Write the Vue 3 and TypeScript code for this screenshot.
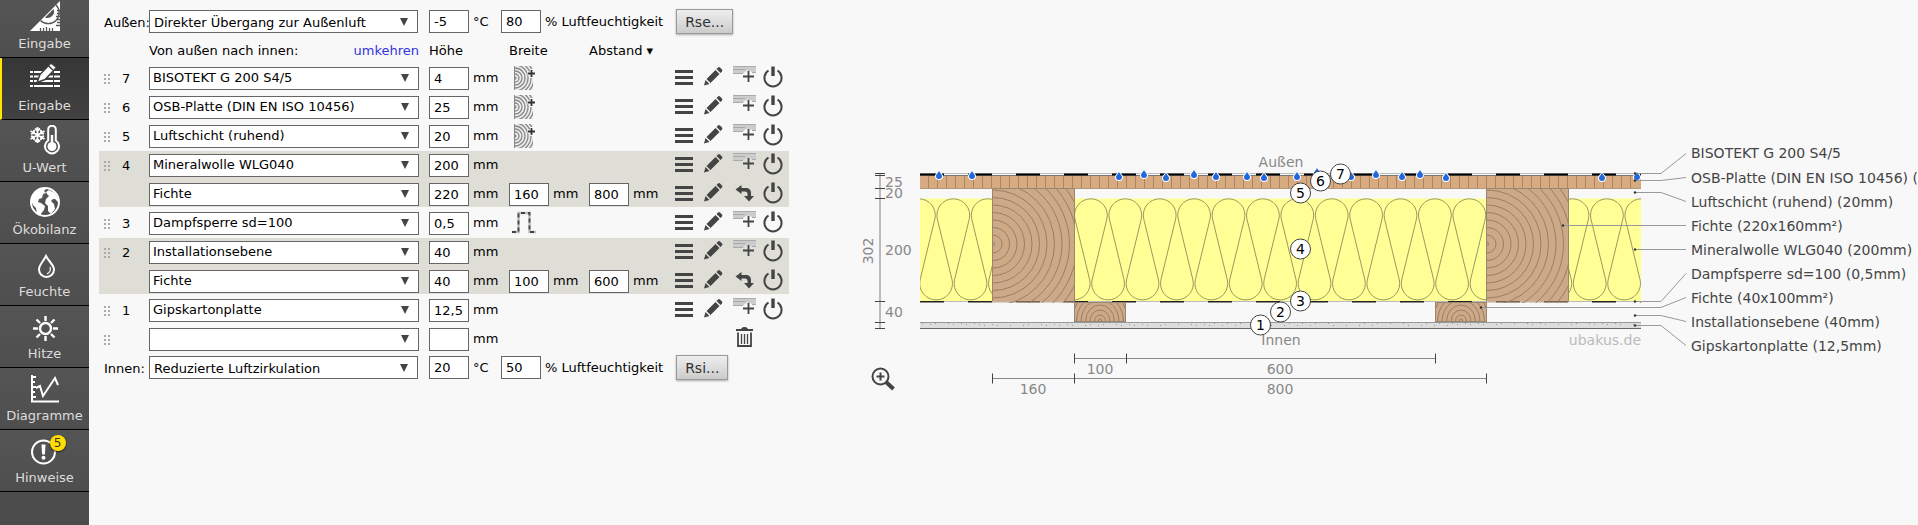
<script setup lang="ts">
import { reactive } from 'vue'

interface NavItem { label: string; icon: string; active?: boolean; badge?: number }
interface Row {
  material: string
  height: string
  width?: string
  spacing?: string
  extra?: 'wood' | 'fold'
  actions: string[]
}
interface Layer { no: string; framed?: boolean; rows: Row[] }
interface Climate {
  id: string
  label: string
  kind: string
  temp: string
  humidity: string
  button: string
}

const nav: NavItem[] = [
  { label: 'Eingabe', icon: 'ruler' },
  { label: 'Eingabe', icon: 'edit', active: true },
  { label: 'U-Wert', icon: 'thermo' },
  { label: 'Ökobilanz', icon: 'globe' },
  { label: 'Feuchte', icon: 'drop' },
  { label: 'Hitze', icon: 'sun' },
  { label: 'Diagramme', icon: 'chart' },
  { label: 'Hinweise', icon: 'alert', badge: 5 },
]

const outside = reactive<Climate>({
  id: 'aussen', label: 'Außen:', kind: 'Direkter Übergang zur Außenluft', temp: '-5', humidity: '80', button: 'Rse...',
})
const inside = reactive<Climate>({
  id: 'innen', label: 'Innen:', kind: 'Reduzierte Luftzirkulation', temp: '20', humidity: '50', button: 'Rsi...',
})

const std = ['menu', 'pencil', 'add', 'power']
const beam = ['menu', 'pencil', 'turn', 'power']
const layers = reactive<Layer[]>([
  { no: '7', rows: [{ material: 'BISOTEKT G 200 S4/5', height: '4', extra: 'wood', actions: std }] },
  { no: '6', rows: [{ material: 'OSB-Platte (DIN EN ISO 10456)', height: '25', extra: 'wood', actions: std }] },
  { no: '5', rows: [{ material: 'Luftschicht (ruhend)', height: '20', extra: 'wood', actions: std }] },
  {
    no: '4', framed: true, rows: [
      { material: 'Mineralwolle WLG040', height: '200', actions: std },
      { material: 'Fichte', height: '220', width: '160', spacing: '800', actions: beam },
    ],
  },
  { no: '3', rows: [{ material: 'Dampfsperre sd=100', height: '0,5', extra: 'fold', actions: std }] },
  {
    no: '2', framed: true, rows: [
      { material: 'Installationsebene', height: '40', actions: std },
      { material: 'Fichte', height: '40', width: '100', spacing: '600', actions: beam },
    ],
  },
  { no: '1', rows: [{ material: 'Gipskartonplatte', height: '12,5', actions: std }] },
  { no: '', rows: [{ material: '', height: '', actions: ['', '', 'trash', ''] }] },
])

const actionNames: Record<string, string> = {
  menu: 'Menü', pencil: 'Bearbeiten', add: 'Schicht einfügen', turn: 'Drehen', power: 'Ein/Aus', trash: 'Löschen',
}

/* Section drawing */
const left = 60
const right = 781
const beams = [132, 626]
const battens = [214, 575]

const boardJoints = Array.from({ length: 79 }, (_, i) => left + 9 * (i + 1))

function woolPath(): string {
  const step = 34.4
  let d = ''
  for (let k = -8; k < 16; k++) {
    const c = 299.7 + k * step
    const n = c + step / 2
    d += `${d ? 'L' : 'M'}${(c - 16).toFixed(1)} 78.8A16.4 16.4 0 1 1 ${(c + 16).toFixed(1)} 78.8`
    d += `L${(n - 16).toFixed(1)} 139.9A16.4 16.4 0 1 0 ${(n + 16).toFixed(1)} 139.9`
  }
  return d
}
const wool = woolPath()

const rings = Array.from({ length: 13 }, (_, i) => 7.5 * (i + 1) + 1.5)
const smallRings = [2, 6, 11, 16, 21, 26, 31]

const speckles = Array.from({ length: 90 }, (_, i) => ({
  x: left + ((i * 137 + (i % 7) * 31) % 716) + 2,
  y: 183 + ((i * 5 + (i % 3)) % 5),
}))

const drops: [number, number][] = [
  [79, 35], [112, 35], [259, 36], [284, 34], [306, 37], [334, 34], [356, 36], [387, 36], [404, 37],
  [437, 36], [457, 32], [491, 36], [516, 34], [542, 36], [560, 34], [586, 37], [742, 37], [777, 36],
]

const markers = [
  { n: 7, x: 480, y: 34 }, { n: 6, x: 460, y: 41 }, { n: 5, x: 440, y: 53 }, { n: 4, x: 440, y: 109 },
  { n: 3, x: 440, y: 161 }, { n: 2, x: 420, y: 172 }, { n: 1, x: 400, y: 185 },
]

const legend = [
  { text: 'BISOTEKT G 200 S4/5', x: 775, y: 33.5 },
  { text: 'OSB-Platte (DIN EN ISO 10456) (25mm)', x: 775, y: 40.5 },
  { text: 'Luftschicht (ruhend) (20mm)', x: 775, y: 52.5 },
  { text: 'Fichte (220x160mm²)', x: 703, y: 85.5 },
  { text: 'Mineralwolle WLG040 (200mm)', x: 775, y: 109.5 },
  { text: 'Dampfsperre sd=100 (0,5mm)', x: 775, y: 161.5 },
  { text: 'Fichte (40x100mm²)', x: 621, y: 167.5 },
  { text: 'Installationsebene (40mm)', x: 775, y: 175.5 },
  { text: 'Gipskartonplatte (12,5mm)', x: 775, y: 185.5 },
]

const sideTicks = [33.5, 35.5, 48.5, 58.5, 161.5, 182.5, 188.5]
const sideDims = [
  { text: '25', y: 47 }, { text: '20', y: 58 }, { text: '200', y: 115 }, { text: '40', y: 177 },
]
const baseDims = [
  { y: 218.5, ticks: [214.5, 266.5, 575.5], labels: [{ text: '100', x: 240 }, { text: '600', x: 420 }] },
  { y: 238.5, ticks: [132.5, 214.5, 626.5], labels: [{ text: '160', x: 173 }, { text: '800', x: 420 }] },
]
</script>

<template>
  <svg class="defs" width="0" height="0" aria-hidden="true">
    <symbol id="i-ruler" viewBox="0 0 30 30">
      <path fill="#fff" d="M30 0V30H0Z" />
      <path fill="none" stroke="#555" stroke-width="1.300" d="M10.500 19.500A10.500 10.500 0 0 0 26 4" />
      <path fill="#555" d="M15 16.500L23.500 8A6.500 6.500 0 0 1 15 16.500Z" />
      <path stroke="#555" stroke-width="1.300" d="M10.500 30v-3M13.500 30v-3M16.500 30v-4M19.500 30v-3M22.500 30v-3M30 24.500h-4M30 21.500h-3M30 18.500h-3M30 15.500h-4M30 12.500h-3M30 9.500h-3" />
    </symbol>
    <symbol id="i-edit" viewBox="0 0 30 30">
      <path stroke="#fff" stroke-width="2" d="M0 9h30M0 13.500h30M0 18h30M0 23h30" />
      <path stroke="#404040" stroke-width="1" d="M3.500 7v17M23.500 7v17" />
      <path fill="#fff" stroke="#404040" stroke-width="1.500" d="M7 19.500l3-8L21 0l5.500 4.500L15 16.500Z" />
      <path stroke="#404040" stroke-width="1.500" d="M18 2.500l5 4.500" />
    </symbol>
    <symbol id="i-thermo" viewBox="0 0 30 30">
      <g fill="none" stroke="#fff" stroke-width="1.800">
        <path d="M7.500 2v16M.5 6l14 8M14.500 6l-14 8M5 3.500l2.500 2.500L10 3.500M5 16.500l2.500-2.500 2.500 2.500M1 9l3-1V5M14 9l-3-1V5M1 11l3 1v3M14 11l-3 1v3" />
        <path stroke-width="2" d="M18.200 15.500V4.500a3.800 3.800 0 0 1 7.600 0V15.500a7 7 0 1 1-7.600 0Z" />
      </g>
      <circle cx="22" cy="21.500" r="4.500" fill="#fff" />
      <path stroke="#fff" stroke-width="2.500" d="M22 20V10" />
    </symbol>
    <symbol id="i-globe" viewBox="0 0 30 30">
      <circle cx="15" cy="15" r="14" fill="none" stroke="#fff" stroke-width="2" />
      <path fill="#fff" d="M3 7C6 2 11 0 16 2l-2 2 2 2-3 1-1 4-3 1-1 3 3 1 4 3-1 4-4 5-3-1-1-6-3-3-2-5ZM19 3l6 3 4 7-1 2-3-3-2 0-2 2 3 3 1 5-4 5-3-3 0-5-3-3 1-4 3-3-2-2-1-2Z" />
    </symbol>
    <symbol id="i-drop" viewBox="0 0 30 30">
      <path fill="none" stroke="#fff" stroke-width="2" d="M16 7C13 13 9 16 9 20.500a7.500 7.500 0 0 0 15 0C24 16 19 13 16 7Z" />
      <path fill="none" stroke="#fff" stroke-width="1.200" d="M20 18c1 3 0 5.500-3 7" />
    </symbol>
    <symbol id="i-sun" viewBox="0 0 30 30">
      <g fill="none" stroke="#fff" stroke-width="2.400">
        <circle cx="15.500" cy="17.500" r="5.500" />
        <path d="M15.500 5v5M15.500 25v5M3 17.500h5M23 17.500h5M6.500 8.500l3.500 3.500M24.500 8.500l-3.500 3.500M6.500 26.500l3.500-3.500M24.500 26.500l-3.500-3.500" />
      </g>
    </symbol>
    <symbol id="i-chart" viewBox="0 0 30 30">
      <path fill="none" stroke="#fff" stroke-width="2" d="M2 2v26.500h27M2 4h4M2 9h3M2 14h4M2 19h3M2 24h4" />
      <path fill="none" stroke="#fff" stroke-width="2" d="M6 15l4-2 3 10L25 5l3 7" />
    </symbol>
    <symbol id="i-alert" viewBox="0 0 30 30">
      <circle cx="13.500" cy="17" r="11.500" fill="none" stroke="#fff" stroke-width="2" />
      <path fill="#fff" d="M11.500 9.500h4l-.6 10h-2.800Z" />
      <circle cx="13.500" cy="22.800" r="2" fill="#fff" />
    </symbol>
    <symbol id="i-menu" viewBox="0 0 24 24">
      <path fill="#444" d="M3 4h18v3H3zM3 10h18v3H3zM3 16h18v3H3z" />
    </symbol>
    <symbol id="i-pencil" viewBox="0 0 24 24">
      <path fill="#444" d="M2 19.500l1.500-5.500 4 4ZM4.500 13L13.500 4l4 4-9 9ZM14.500 3l1.500-1.500q1-.8 2 0l2 2q.8 1 0 2L18.500 7Z" />
    </symbol>
    <symbol id="i-add" viewBox="0 0 24 24">
      <path fill="#ccc" d="M1 0h23v7h-3a6 6 0 0 0-10 1H1Z" />
      <path stroke="#aaa" d="M1 .5h23M1 3.500h12M1 7.500h10M20 6.500h4" />
      <path stroke="#444" stroke-width="1.800" d="M16.500 5v11M11 10.500h11" />
    </symbol>
    <symbol id="i-power" viewBox="0 0 24 24">
      <path fill="none" stroke="#444" stroke-width="2" d="M6.500 4.500a8.600 8.600 0 1 0 9 0" />
      <path stroke="#444" stroke-width="3.400" d="M11 .5v9.500" />
    </symbol>
    <symbol id="i-turn" viewBox="0 0 24 24">
      <path fill="#444" d="M3.500 7.500L9.500 3v3H14q5 0 5 5.500V14h3l-5 5.500L12 14h3.500v-2q0-2.500-2.500-2.500H9.500v2.500Z" />
    </symbol>
    <symbol id="i-trash" viewBox="0 0 24 24">
      <path fill="#444" d="M4 2h5q1-2 3-2h1q2 0 3 2h5v2H4z" />
      <path fill="none" stroke="#444" stroke-width="1.800" d="M6 5.500v13.500h13V5.500" />
      <path stroke="#444" stroke-width="1.300" d="M9.500 7v10M12.500 7v10M15.500 7v10" />
    </symbol>
    <symbol id="i-wood" viewBox="0 0 24 24">
      <svg x="2" y="0" width="19" height="24" viewBox="0 0 19 24">
        <rect width="19" height="24" fill="#eee" />
        <path stroke="#888" d="M.5 0v24" />
        <g fill="none" stroke="#888" stroke-width="1.300">
          <circle v-for="r in [1, 4, 7, 10, 13, 16, 19, 22]" :key="r" cx="1" cy="12" :r="r" />
        </g>
      </svg>
      <path stroke="#f8f8f8" stroke-width="4" d="M20 3v9M15.500 7.500h9" />
      <path stroke="#333" stroke-width="1.800" d="M19.500 4v7M16 7.500h7" />
    </symbol>
    <symbol id="i-fold" viewBox="0 0 24 24">
      <path fill="none" stroke="#bbb" stroke-width="2.400" d="M0 21h6.500V2h11v19H24" />
      <path fill="none" stroke="#444" stroke-width="1.800" stroke-dasharray="4 3" d="M0 21h6.500V2h11v19H24" />
    </symbol>
  </svg>

  <div class="page">
    <nav class="sidebar">
      <a v-for="(item, i) in nav" :key="i" href="#" class="nav-item" :class="{ active: item.active }">
        <span class="nav-icon">
          <svg width="30" height="30"><use :href="'#i-' + item.icon" /></svg>
          <span v-if="item.badge" class="badge">{{ item.badge }}</span>
        </span>
        <span>{{ item.label }}</span>
      </a>
    </nav>

    <form class="editor" @submit.prevent>
      <div class="climate">
        <label class="climate-label" :for="outside.id">{{ outside.label }}</label>
        <span class="picker">
          <select :id="outside.id" v-model="outside.kind"><option>{{ outside.kind }}</option></select>
          <svg width="8" height="8"><path d="M0 0h8L4 8Z" /></svg>
        </span>
        <label class="measure temp"><input v-model="outside.temp" type="text">°C</label>
        <label class="measure"><input v-model="outside.humidity" type="text">% Luftfeuchtigkeit</label>
        <button type="button" class="resist">{{ outside.button }}</button>
      </div>

      <div class="row heading">
        <span></span>
        <span class="heading-name">Von außen nach innen:<a href="#">umkehren</a></span>
        <span>Höhe</span>
        <span>Breite</span>
        <button type="button" class="plain">Abstand ▾</button>
      </div>

      <div v-for="layer in layers" :key="layer.no" class="layer" :class="{ framed: layer.framed }">
        <div v-for="(row, i) in layer.rows" :key="i" class="row">
          <span class="lead">
            <template v-if="i === 0">
              <svg width="6" height="10" class="grip">
                <path d="M0 0h2v2H0zM4 0h2v2H4zM0 4h2v2H0zM4 4h2v2H4zM0 8h2v2H0zM4 8h2v2H4z" />
              </svg>
              <span>{{ layer.no }}</span>
            </template>
          </span>
          <span class="picker">
            <select v-model="row.material" aria-label="Material"><option>{{ row.material }}</option></select>
            <svg width="8" height="8"><path d="M0 0h8L4 8Z" /></svg>
          </span>
          <label class="measure"><input v-model="row.height" type="text">mm</label>
          <label v-if="row.width" class="measure"><input v-model="row.width" type="text">mm</label>
          <button v-else-if="row.extra" type="button" class="plain extra" aria-label="Einlage">
            <svg width="24" height="24"><use :href="'#i-' + row.extra" /></svg>
          </button>
          <span v-else></span>
          <label v-if="row.spacing" class="measure"><input v-model="row.spacing" type="text">mm</label>
          <span v-else></span>
          <span class="actions">
            <template v-for="(a, j) in row.actions" :key="j">
              <button v-if="a" type="button" class="plain action" :aria-label="actionNames[a]">
                <svg width="24" height="24"><use :href="'#i-' + a" /></svg>
              </button>
              <span v-else class="action"></span>
            </template>
          </span>
        </div>
      </div>

      <div class="climate last">
        <label class="climate-label" :for="inside.id">{{ inside.label }}</label>
        <span class="picker">
          <select :id="inside.id" v-model="inside.kind"><option>{{ inside.kind }}</option></select>
          <svg width="8" height="8"><path d="M0 0h8L4 8Z" /></svg>
        </span>
        <label class="measure temp"><input v-model="inside.temp" type="text">°C</label>
        <label class="measure"><input v-model="inside.humidity" type="text">% Luftfeuchtigkeit</label>
        <button type="button" class="resist">{{ inside.button }}</button>
      </div>
    </form>

    <figure class="section">
      <svg class="drawing" viewBox="0 0 1058 260" preserveAspectRatio="xMinYMin meet">
        <defs>
          <clipPath id="c-section"><rect :x="left" y="30" :width="right - left" height="160" /></clipPath>
          <g id="d-drop">
            <path fill="#fff" d="M0-5C2.500-2 4-1 4 1a4 4 0 0 1-8 0C-4-1-2.500-2 0-5Z" />
            <path fill="#2268dd" d="M0-4C1.500-1.500 3-.5 3 1a3 3 0 0 1-6 0C-3-.5-1.500-1.500 0-4Z" />
          </g>
        </defs>

        <g clip-path="url(#c-section)">
          <rect :x="left" y="58.500" width="721" height="103" fill="#ffff96" />
          <path :d="wool" class="ink" />
          <path class="rule" d="M60 161.500H781" />
          <path class="dash barrier" d="M60 161.750H781" />
          <rect :x="left" y="36" width="721" height="12" fill="#d8aa82" />
          <path v-for="x in boardJoints" :key="x" :d="`M${x - .5} 36V48`" stroke="#a8875c" />
          <path d="M60 48.500H781" stroke="#b09a80" />
          <path class="rule" d="M60 33.500H781" />
          <path d="M60 35.500H781" stroke="#777" />
          <path class="dash" d="M60 34.500H781" />
          <rect :x="left" y="182" width="721" height="7" fill="#ddd" />
          <rect v-for="(s, i) in speckles" :key="i" :x="s.x" :y="s.y" width="1" height="1" fill="#999" />
          <path d="M60 182.500H781" stroke="#999" />
          <path d="M60 188.500H781" stroke="#666" />
        </g>

        <svg v-for="x in beams" :key="x" :x="x" y="48" width="83" height="115" viewBox="0 0 83 115">
          <rect width="83" height="113" fill="#cca987" />
          <rect y="113" width="83" height="2" fill="#cca987" opacity=".5" />
          <circle cx="1" cy="56" r="1.500" class="grain" />
          <circle v-for="r in rings" :key="r" cx="1" cy="56" :r="r" class="grain" />
          <path class="edge" d="M.5 113V.5H82.500V113" />
        </svg>
        <svg v-for="x in battens" :key="x" :x="x" y="162" width="52" height="20" viewBox="0 0 52 20">
          <rect width="52" height="20" fill="#cca987" />
          <ellipse v-for="r in smallRings" :key="r" cx="26" cy="19" :rx="r * .9" :ry="r" class="grain" />
          <rect x=".5" y=".5" width="51" height="19" class="edge" />
        </svg>

        <use v-for="(d, i) in drops" :key="i" href="#d-drop" :x="d[0]" :y="d[1]" />

        <g class="caption">
          <text x="421" y="27" text-anchor="middle">Außen</text>
          <text x="421" y="205" text-anchor="middle">Innen</text>
          <text x="781" y="205" text-anchor="end" class="source">ubakus.de</text>
          <text v-for="d in sideDims" :key="d.text" x="25" :y="d.y">{{ d.text }}</text>
          <text transform="translate(13 111) rotate(-90)" text-anchor="middle">302</text>
          <template v-for="b in baseDims" :key="b.y">
            <text v-for="l in b.labels" :key="l.text" :x="l.x" :y="b.y + 15.500" text-anchor="middle">{{ l.text }}</text>
          </template>
        </g>

        <path d="M20 33V189" stroke="#bbb" stroke-width="2" />
        <path v-for="y in sideTicks" :key="y" :d="`M15 ${y}H25`" stroke="#444" />
        <template v-for="b in baseDims" :key="b.y">
          <path :d="`M${b.ticks[0]} ${b.y}H${b.ticks[2]}`" stroke="#888" />
          <path v-for="t in b.ticks" :key="t" :d="`M${t} ${b.y - 5}v10`" stroke="#444" />
        </template>

        <g v-for="(l, i) in legend" :key="l.text">
          <path :d="`M${l.x} ${l.y}H${Math.abs(l.y - 13.5 - i * 24) < 1 ? 826 : 801}L826 ${13.5 + i * 24}`" class="leader" />
          <circle :cx="l.x" :cy="l.y" r="1.200" fill="#333" />
          <text x="831" :y="(i ? 19 : 18) + i * 24" class="legend">{{ l.text }}</text>
        </g>

        <g v-for="m in markers" :key="m.n">
          <circle :cx="m.x + .5" :cy="m.y" r="10" fill="#fff" stroke="#444" />
          <text :x="m.x + .5" :y="m.y + 5" text-anchor="middle" class="marker">{{ m.n }}</text>
        </g>
      </svg>
      <button type="button" class="plain zoom" aria-label="Vergrößern">
        <svg width="24" height="24" viewBox="0 0 24 24" fill="none" stroke="#444">
          <circle cx="9.500" cy="9.500" r="8" stroke-width="2" />
          <path stroke-width="2" d="M9.500 5.500v8M5.500 9.500h8" />
          <path stroke-width="4" d="M15 15l7.500 7" />
        </svg>
      </button>
    </figure>
  </div>
</template>

<style>
body {
  background: #f8f8f8;
}
</style>

<style scoped>
.page,
.page * {
  box-sizing: border-box;
}
.defs {
  display: none;
}
.page {
  display: flex;
  align-items: stretch;
  min-height: 100vh;
  overflow: hidden;
  font: 13px/16px "DejaVu Sans", Verdana, sans-serif;
  color: #000;
}
.page select,
.page input,
.page button {
  font: inherit;
  color: inherit;
  margin: 0;
}

.sidebar {
  flex: 0 0 89px;
  background: #4c4c4c;
}
.nav-item {
  display: flex;
  flex-direction: column;
  align-items: center;
  justify-content: flex-end;
  gap: 5px;
  height: 62px;
  padding-bottom: 5px;
  border-bottom: 1px solid #000;
  background: linear-gradient(#555, #4e4e4e);
  color: #ddd;
  text-decoration: none;
}
.nav-item:first-child {
  height: 58px;
}
.nav-item.active {
  border-left: 2px solid #ffe600;
  padding-right: 2px;
  background: linear-gradient(#363636, #424242);
}
.nav-icon {
  position: relative;
  display: block;
  height: 30px;
}
.nav-icon svg {
  display: block;
}
.badge {
  position: absolute;
  top: 0;
  right: -6px;
  width: 16px;
  height: 16px;
  border-radius: 50%;
  background: #fd0;
  color: #333;
  font-size: 12px;
  text-align: center;
  box-shadow: 0 1px 2px #222;
}

.editor {
  flex: 0 0 auto;
  width: 690px;
  margin-left: 10px;
  padding-top: 10px;
}
.climate {
  display: flex;
  align-items: center;
  height: 23px;
}
.climate.last {
  margin-top: 4px;
}
.climate-label {
  width: 50px;
  padding: 2px 0 0 5px;
  white-space: nowrap;
}
.climate .picker {
  width: 269px;
  margin-right: 11px;
}
.climate select {
  padding: 2px 24px 0 4px;
}
.temp {
  width: 72px;
}
.page .resist {
  height: 25px;
  margin-left: 13px;
  padding: 0 8px;
  border: 1px solid #999;
  background: linear-gradient(#eee, #ccc);
  box-shadow: 0 1px 2px #aaa;
  font-size: 14px;
  color: #333;
}

.row {
  display: grid;
  grid-template-columns: 50px 280px 80px 80px 80px 1fr;
  align-items: center;
  height: 23px;
}
.heading {
  height: 28px;
  margin-top: 3px;
  padding-top: 1px;
}
.heading-name {
  display: flex;
  justify-content: space-between;
  padding-right: 10px;
}
.heading a {
  color: #33d;
  text-decoration: none;
}
.layer {
  display: grid;
  gap: 6px;
  padding: 2px 0;
  margin-bottom: 2px;
}
.framed {
  background: #deded6;
}
.lead {
  display: flex;
  align-items: center;
  gap: 12px;
  padding: 2px 0 0 5px;
}
.grip {
  fill: #aaa;
}
.picker {
  display: grid;
  align-items: center;
  width: 270px;
}
.picker > * {
  grid-area: 1 / 1;
}
.picker svg {
  justify-self: end;
  margin-right: 10px;
  fill: #444;
  pointer-events: none;
}
select,
input {
  appearance: none;
  height: 23px;
  border: 1px solid #666;
  border-radius: 0;
  background: #fff;
}
select {
  width: 100%;
  padding: 0 24px 0 3px;
}
input {
  width: 40px;
  padding: 0 0 0 4px;
}
.measure {
  display: flex;
  align-items: center;
  gap: 4px;
  white-space: nowrap;
}
.plain {
  padding: 0;
  border: 0;
  background: none;
  text-align: left;
}
.plain svg {
  display: block;
}
.extra {
  padding-left: 3px;
}
.actions {
  display: flex;
  justify-content: flex-end;
  padding-right: 2px;
}
.action {
  width: 30px;
  padding-left: 3px;
}

.section {
  flex: 1 1 0;
  min-width: 0;
  display: grid;
  align-content: start;
  margin: 140px 0 0 71px;
}
.drawing,
.zoom {
  grid-area: 1 / 1;
}
.drawing {
  display: block;
  width: 100%;
  font-size: 14px;
}
.zoom {
  align-self: end;
  justify-self: start;
  padding: 0 0 9px 11px;
}
.ink {
  fill: none;
  stroke: #99995e;
}
.rule {
  stroke: #bbb;
}
.dash {
  stroke: #000;
  stroke-width: 2;
  stroke-dasharray: 24 24;
}
.barrier {
  stroke: #222;
  stroke-width: 1.5;
}
.grain {
  fill: none;
  stroke: #9c7e66;
}
.edge {
  fill: none;
  stroke: #9a8670;
}
.caption {
  fill: #888;
}
.source {
  fill: #bbb;
}
.leader {
  fill: none;
  stroke: #999;
}
.legend {
  fill: #444;
}
.marker {
  fill: #000;
}
</style>
